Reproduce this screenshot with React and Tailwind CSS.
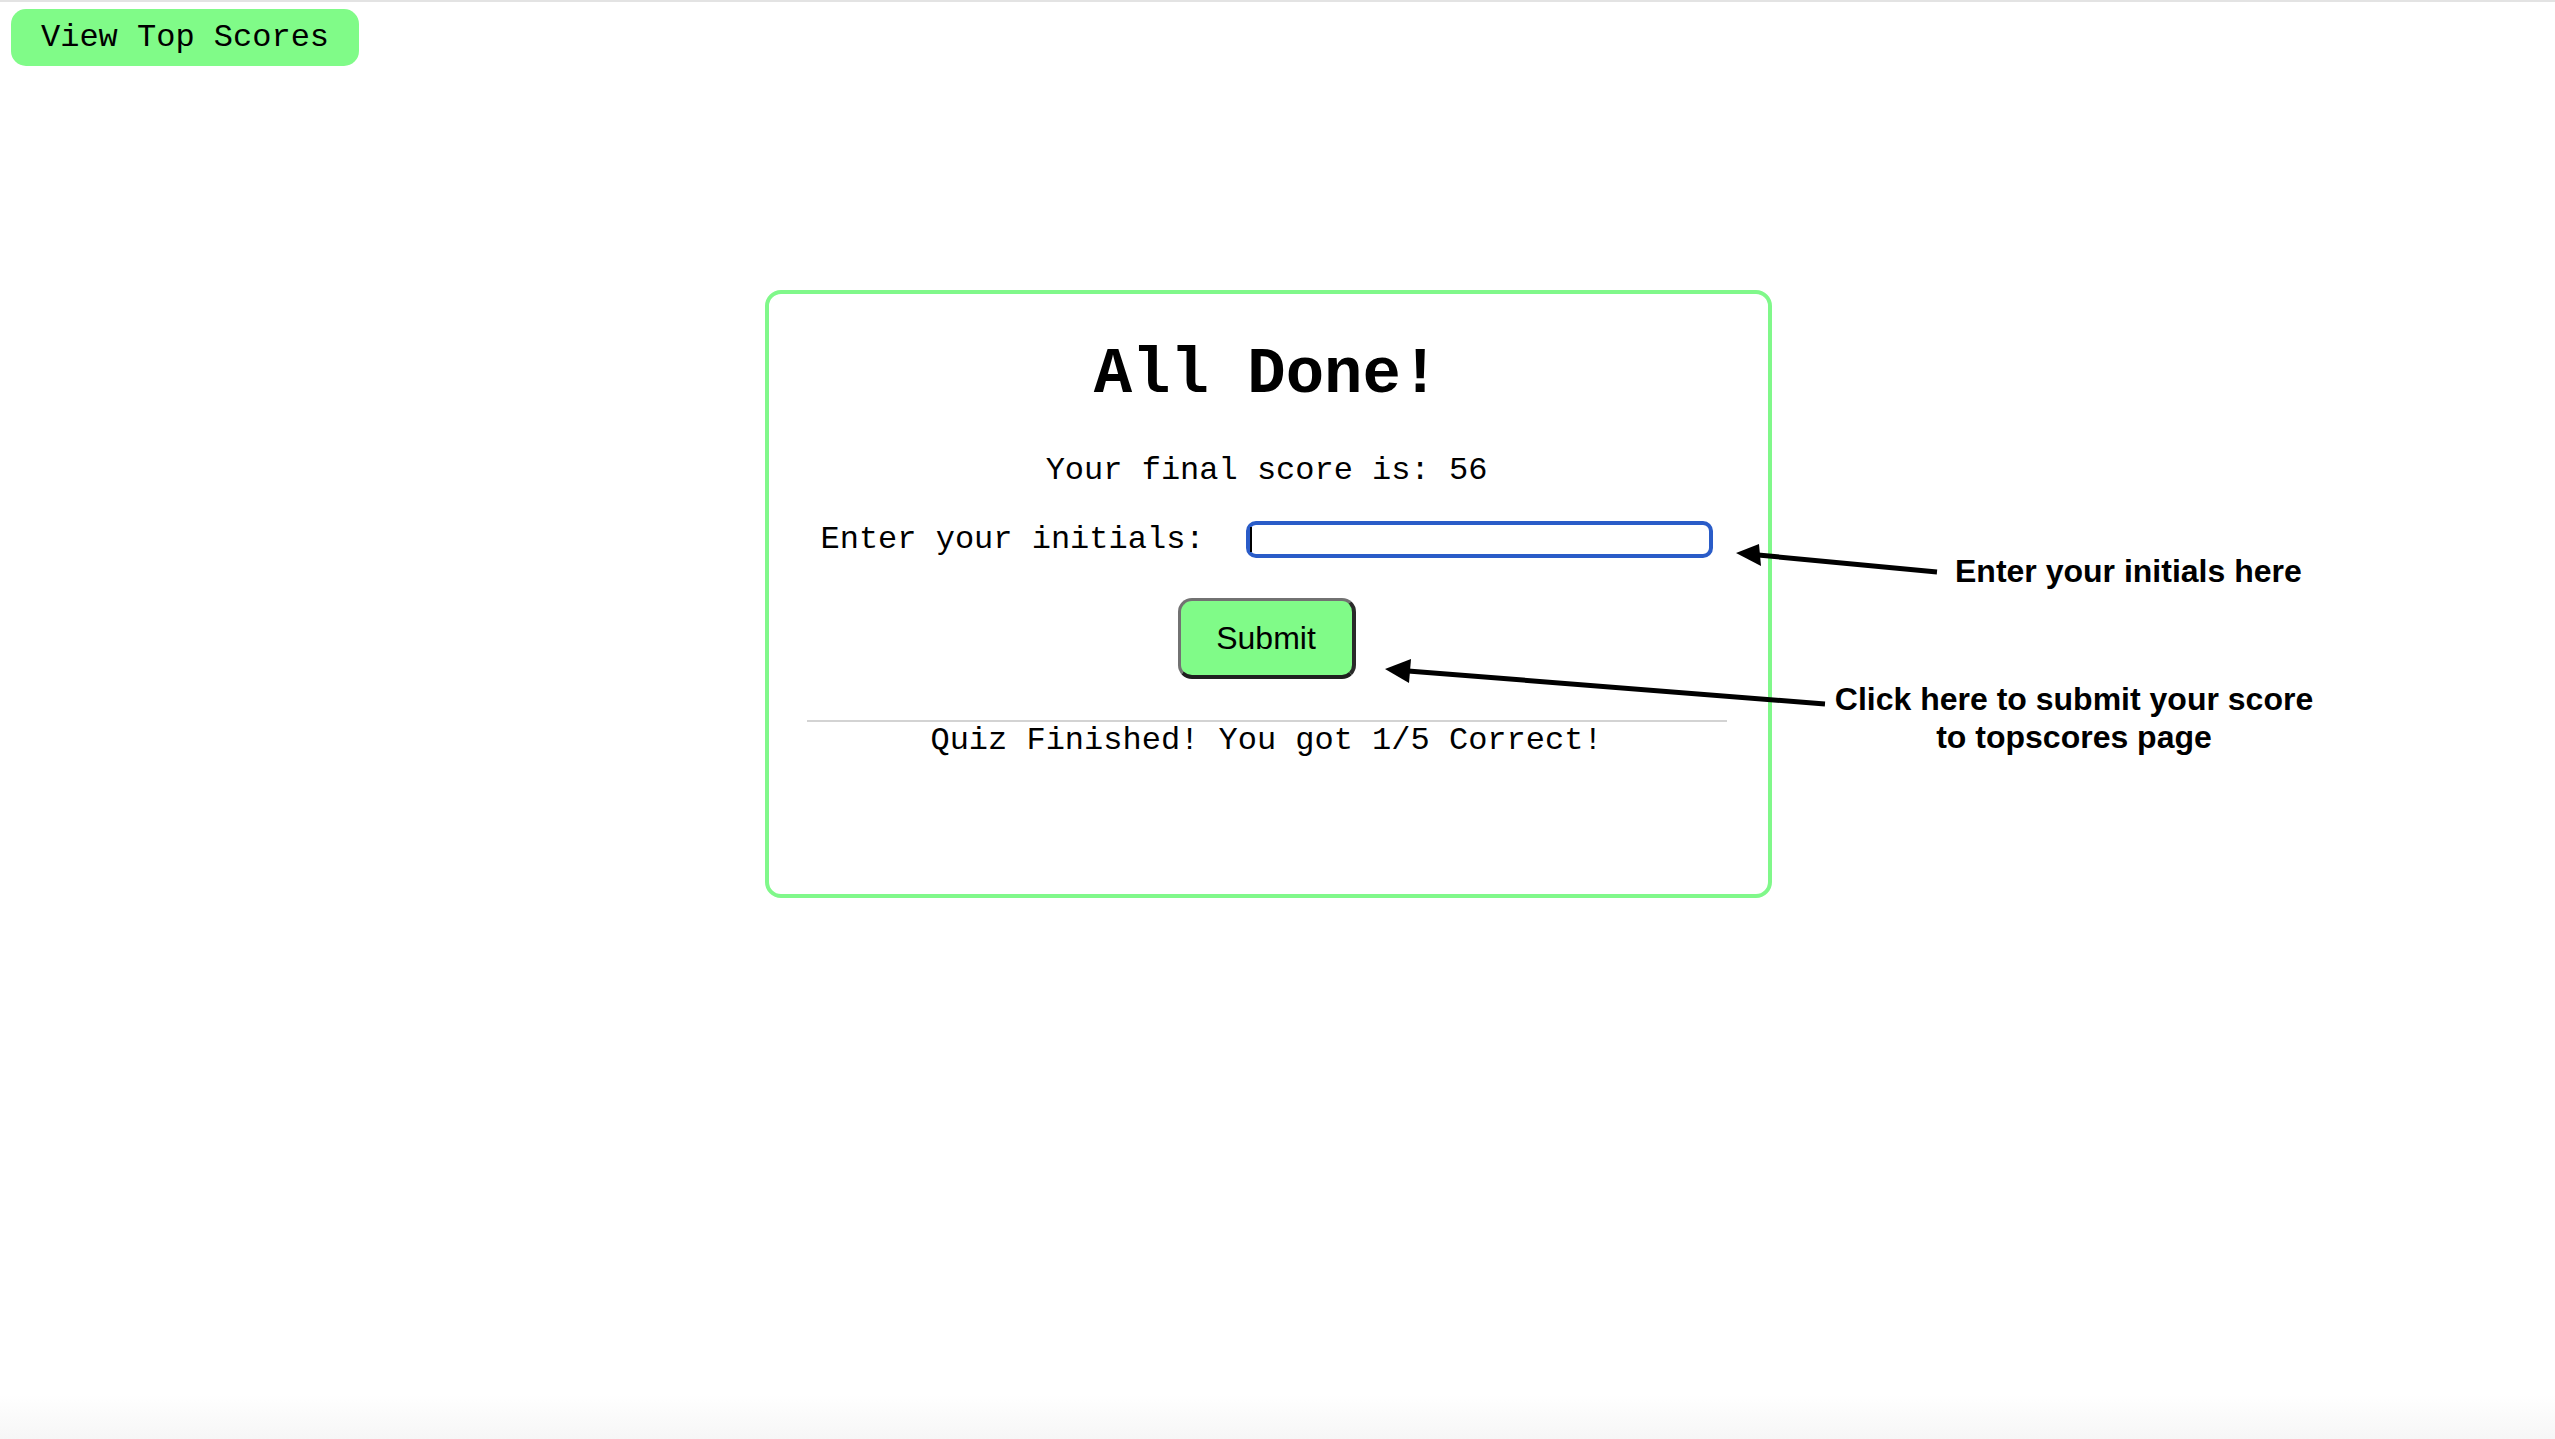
import { useState } from 'react';

// Pantalla final del quiz con anotaciones de ayuda
const mono = "font-['Liberation_Mono','Courier_New',monospace]";
const sans = "font-['Liberation_Sans',Arial,sans-serif]";

const Arrows = () => (
  <svg className="absolute inset-0 pointer-events-none" width="2555" height="1439">
    {/* flecha hacia el input */}
    <line x1="1937" y1="570" x2="1758" y2="553" stroke="#000" strokeWidth="5" />
    <polygon points="1736,551 1759,542 1761,564" fill="#000" />
    {/* flecha hacia el boton */}
    <line x1="1825" y1="702" x2="1408" y2="669" stroke="#000" strokeWidth="5" />
    <polygon points="1385,667 1411,657 1409,681" fill="#000" />
  </svg>
);

export default function App() {
  const [initials, setInitials] = useState('');

  return (
    <div className="relative flex flex-col h-screen overflow-hidden bg-white border-t-2 border-[#e3e3e3]">
      <div>
        <button
          className={`${mono} mt-[7px] ml-[11px] h-[57px] px-[30px] rounded-[15px] bg-[#80fb88] text-black text-[32px] leading-[36px]`}
        >
          View Top Scores
        </button>
      </div>

      {/* Tarjeta principal */}
      <div className="mt-[224px] ml-[765px] w-[1007px] h-[608px] border-4 border-[#80f88a] rounded-[16px] flex flex-col items-center pt-[45px] pr-[4px]">
        <h1 className={`${mono} text-[64px] leading-[72px] font-bold text-black`}>All Done!</h1>
        <p className={`${mono} mt-[42px] text-[32px] leading-[36px] text-black`}>Your final score is: 56</p>
        <div className="mt-[32px] flex items-center gap-[41px]">
          <label className={`${mono} text-[32px] leading-[36px] text-black`}>Enter your initials:</label>
          <div className="relative">
            <input
              value={initials}
              onChange={(e) => setInitials(e.target.value)}
              className={`${mono} w-[467px] h-[37px] border-4 border-[#2a5cc8] rounded-[10px] bg-white outline-none caret-transparent px-2 text-[28px]`}
            />
            <span className="absolute left-[4px] top-[6px] w-[2px] h-[25px] bg-black"></span>
          </div>
        </div>
        <button
          className={`${sans} mt-[40px] w-[178px] h-[81px] rounded-[14px] bg-[#80fb88] border-[3px] border-b-4 border-r-4 border-t-[#727272] border-l-[#727272] border-r-[#2a2a2a] border-b-[#1f1f1f] text-black text-[32px]`}
        >
          Submit
        </button>
        <div className="mt-[41px] w-[920px] h-[2px] bg-[#d3d3d3]"></div>
        <p className={`${mono} mt-[1px] text-[32px] leading-[36px] text-black`}>Quiz Finished! You got 1/5 Correct!</p>
      </div>

      {/* Barra inferior de la ventana */}
      <div className="mt-auto h-[44px] bg-gradient-to-b from-white to-[#f6f6f6]"></div>

      {/* Anotaciones */}
      <Arrows />
      <div className={`${sans} absolute left-[1955px] top-[550px] text-[32px] leading-[38px] font-bold text-black whitespace-nowrap`}>
        Enter your initials here
      </div>
      <div className={`${sans} absolute left-[1774px] top-[678px] w-[600px] text-center text-[32px] leading-[38px] font-bold text-black`}>
        Click here to submit your score
        <br />
        to topscores page
      </div>
    </div>
  );
}
